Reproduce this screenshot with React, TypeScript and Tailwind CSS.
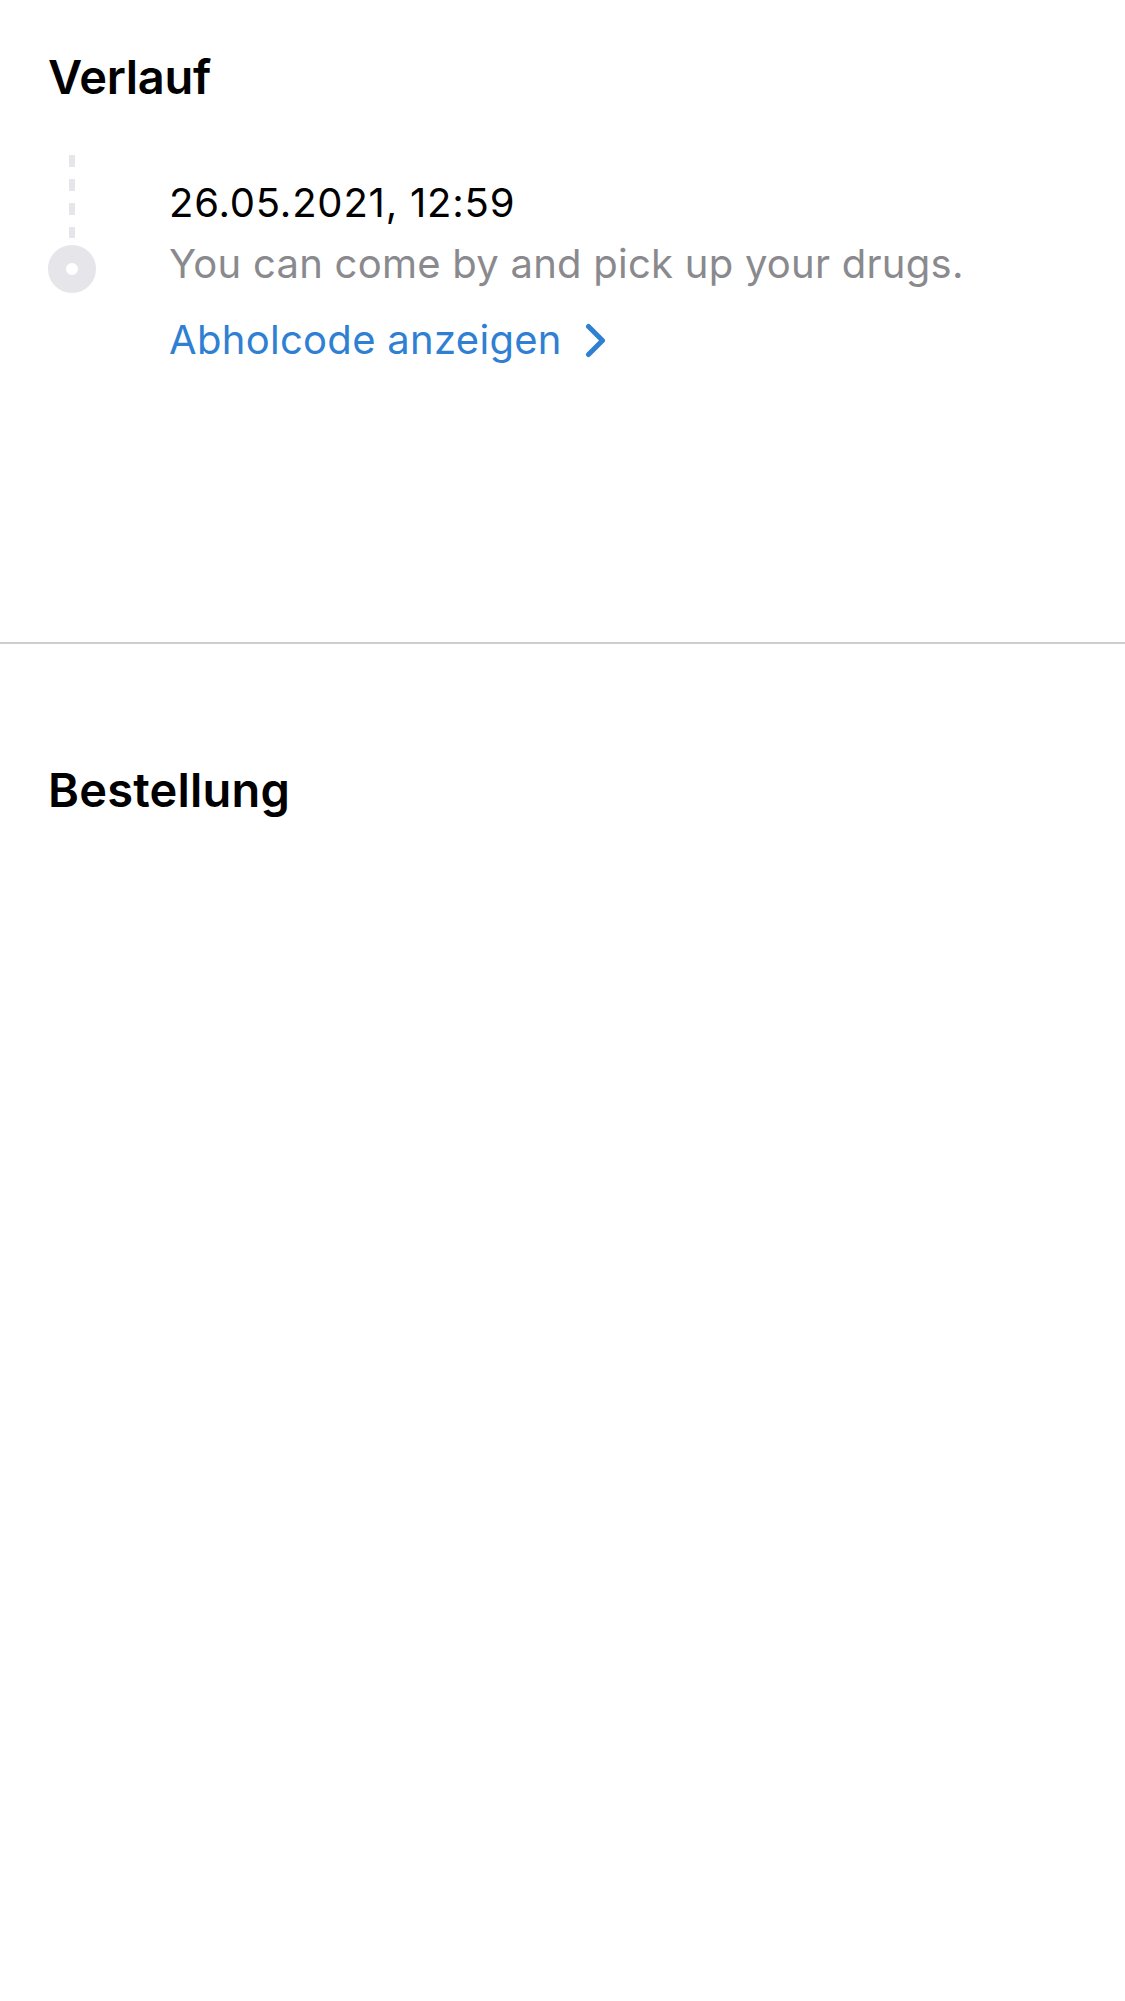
export default function App() {
  return (
    <div className="min-h-screen bg-white font-['Inter','Noto_Sans',sans-serif] text-black">
      {/* Verlauf */}
      <section className="pl-[48px] pt-[48px]">
        <h2 className="text-[47px] leading-[58px] font-semibold tracking-[-0.3px]">Verlauf</h2>

        <div className="mt-[49px] flex">
          {/* timeline marker */}
          <div className="flex w-[48px] flex-col items-center">
            <div className="flex h-[83px] flex-col gap-[12px]">
              <div className="h-[12px] w-[6px] bg-[#e5e5ea]" />
              <div className="h-[12px] w-[6px] bg-[#e5e5ea]" />
              <div className="h-[12px] w-[6px] bg-[#e5e5ea]" />
              <div className="h-[11px] w-[6px] bg-[#e5e5ea]" />
            </div>
            <div className="mt-[7px] h-[48px] w-[48px] rounded-full border-[18px] border-[#e5e5ea] bg-white" />
          </div>

          {/* entry */}
          <div className="ml-[73px] pt-[17px]">
            <p className="text-[40px] leading-[61px] tracking-[0.8px]">26.05.2021, 12:59</p>
            <p className="text-[40px] leading-[61px] tracking-[0.25px] text-[#8a8a8e]">You can come by and pick up your drugs.</p>
            <button className="mt-[15px] flex items-center gap-[23px] text-[40px] leading-[61px] tracking-[0.3px] text-[#2f7fd3]">
              <span>Abholcode anzeigen</span>
              <svg width="21" height="35" viewBox="0 0 21 35" fill="none" className="mt-[2px]">
                <path d="M3.5 3.5 L17.5 17.5 L3.5 31.5" stroke="#2f7fd3" strokeWidth="5" strokeLinecap="round" strokeLinejoin="round" />
              </svg>
            </button>
          </div>
        </div>
      </section>

      <div className="mt-[272px] h-[2px] w-full bg-[#cdcdd1]" />

      {/* Bestellung */}
      <section className="pl-[48px] pt-[117px]">
        <h2 className="text-[47px] leading-[58px] font-semibold tracking-[0.2px]">Bestellung</h2>
      </section>
    </div>
  );
}
